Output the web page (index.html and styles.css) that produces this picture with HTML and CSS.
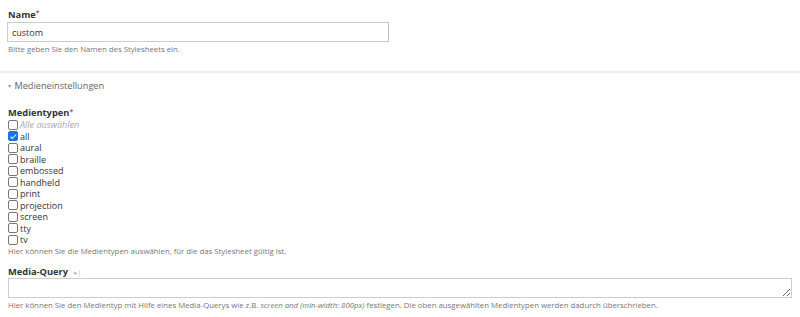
FILE: index.html
```html
<html lang="de">
<head>
    <meta charset="UTF-8">
    <title>Stylesheet</title>
    <link rel="stylesheet" href="styles.css">
</head>
<body>

    <div class="field">
        <label class="label">Name<span class="req">*</span></label>
        <input class="text" type="text" value="custom">
        <p class="help">Bitte geben Sie den Namen des Stylesheets ein.</p>
    </div>

    <hr class="sep">

    <div class="toggle"><span class="caret">&#9662;</span> Medieneinstellungen</div>

    <div class="field">
        <label class="label tight">Medientypen<span class="req">*</span></label>
        <ul class="checks">
            <li class="all"><input type="checkbox"> Alle auswählen</li>
            <li><input type="checkbox" checked> all</li>
            <li><input type="checkbox"> aural</li>
            <li><input type="checkbox"> braille</li>
            <li><input type="checkbox"> embossed</li>
            <li><input type="checkbox"> handheld</li>
            <li><input type="checkbox"> print</li>
            <li><input type="checkbox"> projection</li>
            <li><input type="checkbox"> screen</li>
            <li><input type="checkbox"> tty</li>
            <li><input type="checkbox"> tv</li>
        </ul>
        <p class="help flush">Hier können Sie die Medientypen auswählen, für die das Stylesheet gültig ist.</p>
    </div>

    <div class="field query">
        <label class="label">Media-Query <span class="hint">&#9656;|</span></label>
        <textarea class="area"></textarea>
        <p class="help">Hier können Sie den Medientyp mit Hilfe eines Media-Querys wie z.B. <em>screen and (min-width: 800px)</em> festlegen. Die oben ausgewählten Medientypen werden dadurch überschrieben.</p>
    </div>

</body>
</html>
```

FILE: styles.css
```css
html,body {
	margin:0;
	padding:0;
	background:#fff;
	color:#333;
	font-family:"Open Sans","Noto Sans",sans-serif;
	font-size:9px;
}
body {
	padding:8px 8px 0 8px;
	overflow:hidden;
}
.field {
	display:flex;
	flex-direction:column;
	align-items:flex-start;
}
.label {
	font-weight:bold;
	font-size:9.3px;
	line-height:14px;
	height:14px;
	color:#333;
}
.label.tight {
	line-height:12px;
	height:12px;
}
.req {
	color:#d9534f;
	font-size:7px;
	vertical-align:top;
	line-height:10px;
}
.text {
	width:382px;
	height:20px;
	box-sizing:border-box;
	margin:0 0 0 -1px;
	padding:0 4px;
	border:1px solid #ccc;
	border-right-color:#bbb;
	font-family:inherit;
	font-size:9px;
	color:#333;
	outline:none;
}
.help {
	margin:2px 0 0 0;
	font-size:7.8px;
	line-height:10px;
	color:#777;
}
.help.flush {
	margin-top:0;
}
.sep {
	border:0;
	border-top:2px solid #f0f0f0;
	margin:17px -8px 0 -8px;
}
.toggle {
	margin:7px 0 15px 0;
	font-size:9.2px;
	line-height:12px;
	color:#666;
}
.caret {
	font-size:6px;
	color:#999;
	margin-right:1px;
	vertical-align:1px;
}
.checks {
	list-style:none;
	margin:0;
	padding:0;
}
.checks li {
	display:flex;
	align-items:center;
	gap:2px;
	height:11.5px;
	font-size:9px;
	line-height:11px;
	color:#333;
}
.checks li.all {
	font-style:italic;
	color:#aaa;
}
.checks input {
	-webkit-appearance:none;
	appearance:none;
	width:10px;
	height:10px;
	margin:0;
	border:1px solid #777;
	border-radius:2px;
	background:#fff;
	box-sizing:border-box;
	position:relative;
	flex:none;
}
.checks input:checked {
	background:#1a73e8;
	border-color:#1a73e8;
}
.checks input:checked::after {
	content:"";
	position:absolute;
	left:2.5px;
	top:0.5px;
	width:2px;
	height:4.5px;
	border:solid #fff;
	border-width:0 1.5px 1.5px 0;
	transform:rotate(45deg);
}
.query {
	margin-top:9px;
}
.query .label {
	height:13px;
}
.hint {
	font-weight:normal;
	font-size:7px;
	color:#bbb;
	margin-left:3px;
}
.area {
	width:784px;
	height:20px;
	box-sizing:border-box;
	margin:0;
	border:1px solid #ccc;
	resize:vertical;
	font-family:inherit;
	outline:none;
	display:block;
}
```
